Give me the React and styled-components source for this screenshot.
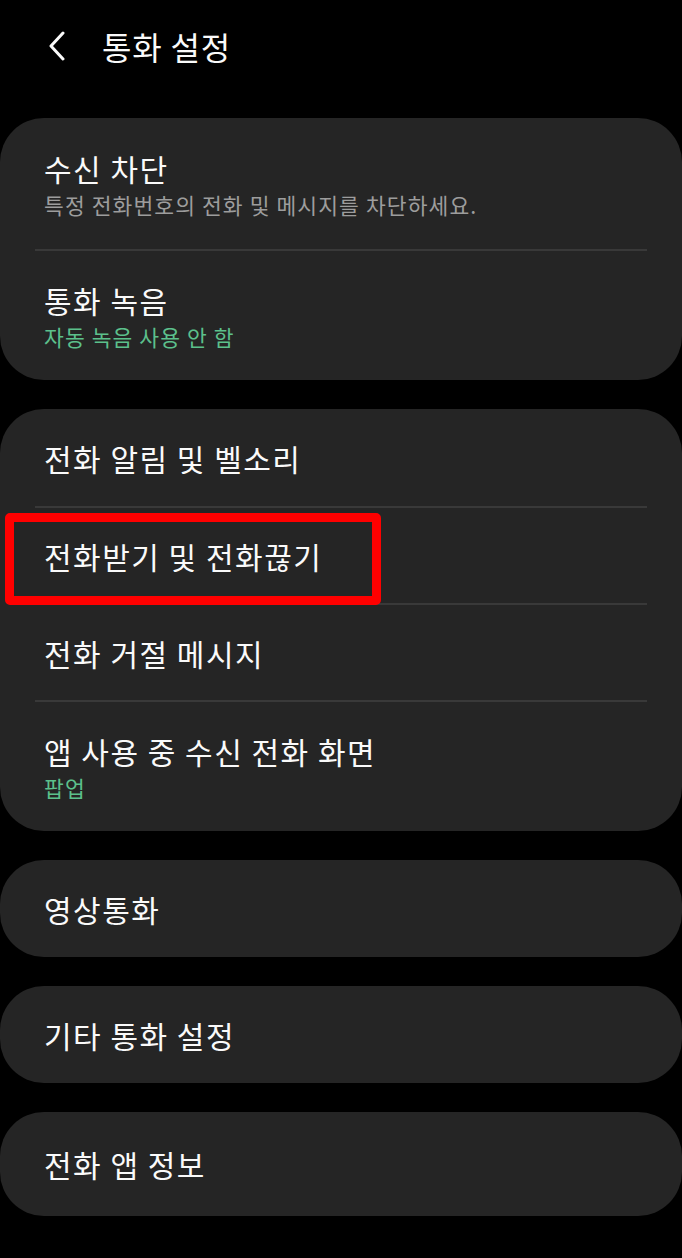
import React from "react"
import styled, { createGlobalStyle } from "styled-components"

/**
 * Styles
 */

const GlobalStyle = createGlobalStyle`
  html, body {
    margin: 0;
    padding: 0;
    background: #000;
  }
  body {
    font-family: "Noto Sans CJK KR", "Noto Sans", sans-serif;
    color: #fafafa;
  }
`

const Screen = styled.div`
  width: 682px;
  min-height: 1258px;
  background: #000;
`

const Header = styled.header`
  display: flex;
  align-items: center;
  height: 96px;
  padding-left: 44px;
  padding-bottom: 4px;
  box-sizing: border-box;
`

const BackButton = styled.button`
  display: flex;
  align-items: center;
  justify-content: center;
  width: 26px;
  height: 40px;
  padding: 0;
  margin-right: 32px;
  border: none;
  background: none;
  color: #fafafa;
`

const Title = styled.h1`
  margin: 0;
  font-size: 32px;
  font-weight: 400;
  letter-spacing: 0.8px;
`

const CardList = styled.div`
  display: flex;
  flex-direction: column;
  gap: 29px;
  padding-top: 22px;
`

const Card = styled.section`
  position: relative;
  background: #252525;
  border-radius: 44px;
  padding: 0 35px;
`

const Row = styled.div`
  display: flex;
  flex-direction: column;
  justify-content: center;
  min-height: ${p => p.$height || 97}px;
  padding: 0 9px;
  box-sizing: border-box;
  & + & {
    border-top: 2px solid #393939;
  }
`

const RowTitle = styled.div`
  font-size: 30px;
  line-height: 40px;
  letter-spacing: 1.5px;
  color: #fafafa;
`

const RowSub = styled.div`
  font-size: 21.5px;
  line-height: 30px;
  margin-top: 2px;
  letter-spacing: 1.1px;
  color: ${p => (p.$accent ? "#5cc08c" : "#9d9d9d")};
`

const Highlight = styled.div`
  position: absolute;
  left: 5px;
  top: 104px;
  width: 376px;
  height: 92px;
  border: 9px solid #ff0000;
  border-radius: 5px;
  box-sizing: border-box;
  pointer-events: none;
`

/**
 * Main component
 */

const Item = ({ title, sub, accent, height }) => (
  <Row $height={sub ? 131 : height}>
    <RowTitle>{title}</RowTitle>
    {sub && <RowSub $accent={accent}>{sub}</RowSub>}
  </Row>
)

const App = () => (
  <Screen>
    <GlobalStyle />
    <Header>
      <BackButton aria-label="뒤로">
        <svg width="20" height="30" viewBox="0 0 20 30" fill="none">
          <path d="M16 2 L4 15 L16 28" stroke="#fafafa" strokeWidth="3" strokeLinecap="round" strokeLinejoin="round" />
        </svg>
      </BackButton>
      <Title>통화 설정</Title>
    </Header>

    <CardList>
      <Card>
        <Item title="수신 차단" sub="특정 전화번호의 전화 및 메시지를 차단하세요." />
        <Item title="통화 녹음" sub="자동 녹음 사용 안 함" accent />
      </Card>

      <Card>
        <Item title="전화 알림 및 벨소리" />
        <Item title="전화받기 및 전화끊기" />
        <Item title="전화 거절 메시지" />
        <Item title="앱 사용 중 수신 전화 화면" sub="팝업" accent />
        <Highlight />
      </Card>

      <Card>
        <Item title="영상통화" />
      </Card>

      <Card>
        <Item title="기타 통화 설정" />
      </Card>

      <Card>
        <Item title="전화 앱 정보" height={104} />
      </Card>
    </CardList>
  </Screen>
)

export default App
